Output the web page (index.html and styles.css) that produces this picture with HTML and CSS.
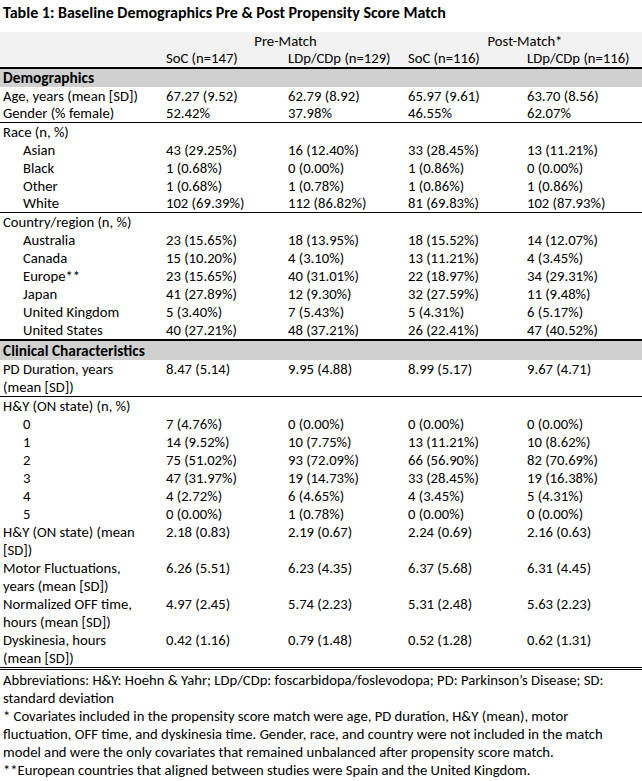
FILE: index.html
```html
<!DOCTYPE html>
<html lang="en">
<head>
<meta charset="utf-8">
<title>Table 1: Baseline Demographics</title>
<link rel="stylesheet" href="styles.css">
</head>
<body>
<div class="page">
  <h1 class="title">Table 1: Baseline Demographics Pre &amp; Post Propensity Score Match</h1>
  <table class="demo">
    <colgroup>
      <col class="c-label">
      <col class="c-soc1">
      <col class="c-ldp1">
      <col class="c-soc2">
      <col class="c-ldp2">
    </colgroup>
    <thead>
      <tr class="hdr-top">
        <th></th>
        <th colspan="2" class="center">Pre-Match</th>
        <th colspan="2" class="center">Post-Match*</th>
      </tr>
      <tr class="hdr-sub">
        <th></th>
        <th>SoC (n=147)</th>
        <th>LDp/CDp (n=129)</th>
        <th>SoC (n=116)</th>
        <th>LDp/CDp (n=116)</th>
      </tr>
    </thead>
    <tbody>
      <tr class="band band-first"><td colspan="5">Demographics</td></tr>
      <tr><td>Age, years (mean [SD])</td><td>67.27 (9.52)</td><td>62.79 (8.92)</td><td>65.97 (9.61)</td><td>63.70 (8.56)</td></tr>
      <tr class="sep"><td>Gender (% female)</td><td>52.42%</td><td>37.98%</td><td>46.55%</td><td>62.07%</td></tr>
      <tr><td colspan="5">Race (n, %)</td></tr>
      <tr><td class="ind">Asian</td><td>43 (29.25%)</td><td>16 (12.40%)</td><td>33 (28.45%)</td><td>13 (11.21%)</td></tr>
      <tr><td class="ind">Black</td><td>1 (0.68%)</td><td>0 (0.00%)</td><td>1 (0.86%)</td><td>0 (0.00%)</td></tr>
      <tr><td class="ind">Other</td><td>1 (0.68%)</td><td>1 (0.78%)</td><td>1 (0.86%)</td><td>1 (0.86%)</td></tr>
      <tr class="sep"><td class="ind">White</td><td>102 (69.39%)</td><td>112 (86.82%)</td><td>81 (69.83%)</td><td>102 (87.93%)</td></tr>
      <tr><td colspan="5">Country/region (n, %)</td></tr>
      <tr><td class="ind">Australia</td><td>23 (15.65%)</td><td>18 (13.95%)</td><td>18 (15.52%)</td><td>14 (12.07%)</td></tr>
      <tr><td class="ind">Canada</td><td>15 (10.20%)</td><td>4 (3.10%)</td><td>13 (11.21%)</td><td>4 (3.45%)</td></tr>
      <tr><td class="ind">Europe**</td><td>23 (15.65%)</td><td>40 (31.01%)</td><td>22 (18.97%)</td><td>34 (29.31%)</td></tr>
      <tr><td class="ind">Japan</td><td>41 (27.89%)</td><td>12 (9.30%)</td><td>32 (27.59%)</td><td>11 (9.48%)</td></tr>
      <tr><td class="ind">United Kingdom</td><td>5 (3.40%)</td><td>7 (5.43%)</td><td>5 (4.31%)</td><td>6 (5.17%)</td></tr>
      <tr class="thick"><td class="ind">United States</td><td>40 (27.21%)</td><td>48 (37.21%)</td><td>26 (22.41%)</td><td>47 (40.52%)</td></tr>
      <tr class="band"><td colspan="5">Clinical Characteristics</td></tr>
      <tr class="sep-tall"><td>PD Duration, years<br>(mean [SD])</td><td>8.47 (5.14)</td><td>9.95 (4.88)</td><td>8.99 (5.17)</td><td>9.67 (4.71)</td></tr>
      <tr><td colspan="5">H&amp;Y (ON state) (n, %)</td></tr>
      <tr><td class="ind">0</td><td>7 (4.76%)</td><td>0 (0.00%)</td><td>0 (0.00%)</td><td>0 (0.00%)</td></tr>
      <tr><td class="ind">1</td><td>14 (9.52%)</td><td>10 (7.75%)</td><td>13 (11.21%)</td><td>10 (8.62%)</td></tr>
      <tr><td class="ind">2</td><td>75 (51.02%)</td><td>93 (72.09%)</td><td>66 (56.90%)</td><td>82 (70.69%)</td></tr>
      <tr><td class="ind">3</td><td>47 (31.97%)</td><td>19 (14.73%)</td><td>33 (28.45%)</td><td>19 (16.38%)</td></tr>
      <tr><td class="ind">4</td><td>4 (2.72%)</td><td>6 (4.65%)</td><td>4 (3.45%)</td><td>5 (4.31%)</td></tr>
      <tr><td class="ind">5</td><td>0 (0.00%)</td><td>1 (0.78%)</td><td>0 (0.00%)</td><td>0 (0.00%)</td></tr>
      <tr><td>H&amp;Y (ON state) (mean<br>[SD])</td><td>2.18 (0.83)</td><td>2.19 (0.67)</td><td>2.24 (0.69)</td><td>2.16 (0.63)</td></tr>
      <tr><td>Motor Fluctuations,<br>years (mean [SD])</td><td>6.26 (5.51)</td><td>6.23 (4.35)</td><td>6.37 (5.68)</td><td>6.31 (4.45)</td></tr>
      <tr><td>Normalized OFF time,<br>hours (mean [SD])</td><td>4.97 (2.45)</td><td>5.74 (2.23)</td><td>5.31 (2.48)</td><td>5.63 (2.23)</td></tr>
      <tr class="double"><td>Dyskinesia, hours<br>(mean [SD])</td><td>0.42 (1.16)</td><td>0.79 (1.48)</td><td>0.52 (1.28)</td><td>0.62 (1.31)</td></tr>
    </tbody>
  </table>
  <div class="notes">
    <p>Abbreviations: H&amp;Y: Hoehn &amp; Yahr; LDp/CDp: foscarbidopa/foslevodopa; PD: Parkinson’s Disease; SD:<br>standard deviation</p>
    <p>* Covariates included in the propensity score match were age, PD duration, H&amp;Y (mean), motor<br>fluctuation, OFF time, and dyskinesia time. Gender, race, and country were not included in the match<br>model and were the only covariates that remained unbalanced after propensity score match.</p>
    <p>**European countries that aligned between studies were Spain and the United Kingdom.</p>
  </div>
</div>
</body>
</html>
```

FILE: styles.css
```css
html, body {
  margin: 0;
  padding: 0;
  background: #ffffff;
}

.page {
  width: 642px;
  font-family: Carlito, Calibri, Lato, "Liberation Sans", sans-serif;
  font-size: 14.67px;
  line-height: 18px;
  color: #000;
}

.title {
  margin: 0;
  padding: 3px 0 0 3px;
  height: 29px;
  font-size: 16px;
  line-height: 19px;
  font-weight: bold;
}

.demo {
  width: 642px;
  table-layout: fixed;
  border-collapse: collapse;
  border-spacing: 0;
}

.c-label { width: 163px; }
.c-soc1 { width: 122px; }
.c-ldp1 { width: 120px; }
.c-soc2 { width: 119px; }
.c-ldp2 { width: 118px; }

.demo th,
.demo td {
  padding: 0 0 0 3px;
  text-align: left;
  vertical-align: top;
  font-weight: normal;
  white-space: nowrap;
  height: 18px;
}

.demo thead tr {
  background: #f2f2f2;
}

.demo thead .center {
  text-align: center;
}

.demo .hdr-sub th {
  height: 17px;
  line-height: 17px;
  border-bottom: 2px solid #000;
}

.demo .band td {
  background: #d0d0d0;
  font-weight: bold;
  font-size: 15.4px;
  height: 19px;
  line-height: 19px;
}

.demo .band-first td {
  height: 18px;
  line-height: 18px;
}

.demo td.ind {
  padding-left: 23px;
}

.demo .sep td {
  height: 17px;
  line-height: 17px;
  border-bottom: 1px solid #000;
}

.demo .sep-tall td {
  border-bottom: 1px solid #000;
}

.demo .thick td {
  border-bottom: 2px solid #000;
}

.demo .double td {
  border-bottom: 3px double #000;
}

.notes {
  padding: 1px 0 0 3px;
  white-space: nowrap;
}

.notes p {
  margin: 0;
}
```
